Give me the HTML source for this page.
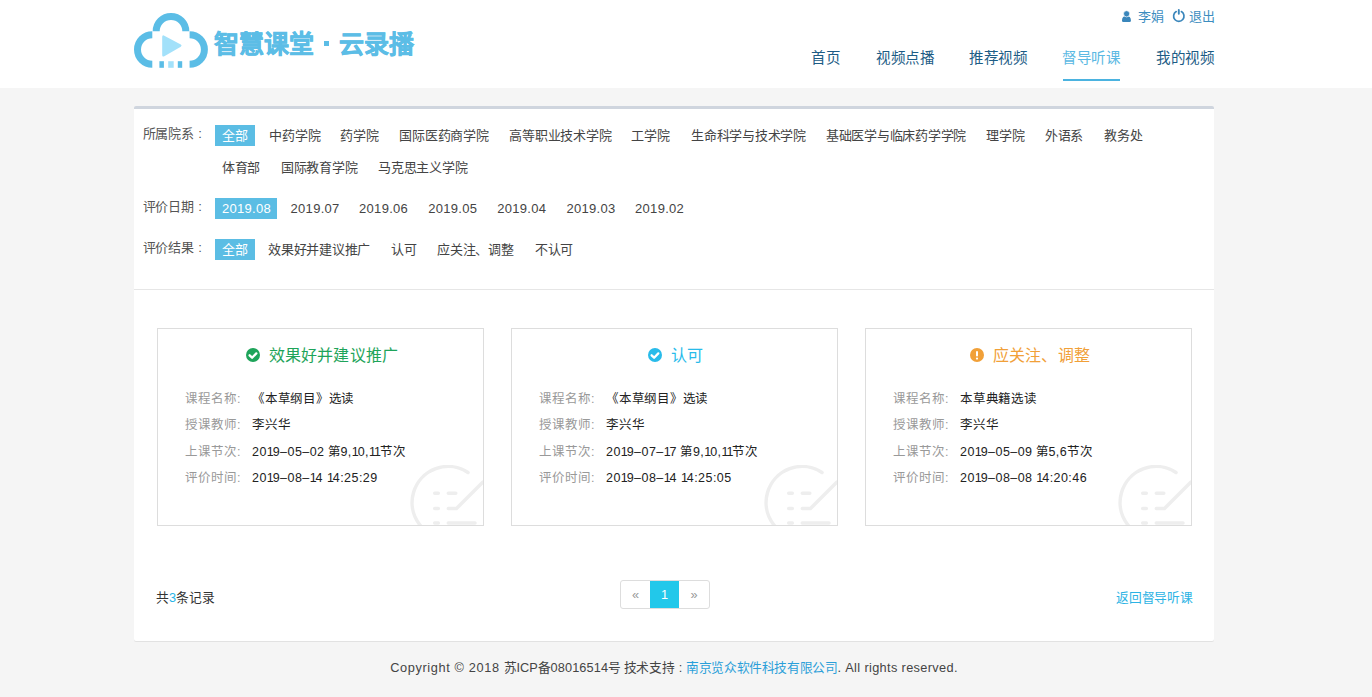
<!DOCTYPE html>
<html lang="zh-CN">
<head>
<meta charset="utf-8">
<style>
*{box-sizing:border-box;margin:0;padding:0}
html,body{width:1372px;height:697px;overflow:hidden}
body{background:#f5f5f5;font-family:"Liberation Sans",sans-serif;color:#333;position:relative}
.abs{position:absolute;white-space:nowrap}
#header{position:absolute;left:0;top:0;width:1372px;height:88px;background:#fff}
.logot{font-size:25px;font-weight:900;color:#5cbde6;letter-spacing:0;line-height:36px;-webkit-text-stroke:0.5px #5cbde6}
.user{top:7px;font-size:13px;color:#3c8dbf;line-height:20px}
.nav{top:47px;font-size:15px;color:#1d5c85;line-height:22px;transform:scale(0.97);transform-origin:0 0}
.nav.on{color:#5bb9e3}
#navline{left:1063px;top:79px;width:57px;height:2px;background:#4bb3e0}
#panel{position:absolute;left:134px;top:106px;width:1080px;height:535px;background:#fff;border-top:3px solid #cfd5de;border-radius:2px;box-shadow:0 1px 0 #e2e2e2}
#divider{position:absolute;left:134px;top:289px;width:1080px;height:1px;background:#e6e6e6}
.lbl{font-size:13px;color:#555;line-height:21px;letter-spacing:-0.25px;word-spacing:1.5px}
.tag{font-size:13px;color:#444;letter-spacing:-0.25px;line-height:21px;height:21px;padding:0 7px}
.tag.dt{letter-spacing:0.3px}
.tag.on{background:#5bbde4;color:#fff}
.card{position:absolute;top:328px;width:327px;height:198px;border:1px solid #ddd;overflow:hidden;background:#fff}
.ctitle{position:absolute;left:0;width:100%;padding-left:3px;top:16px;text-align:center;font-size:16px;line-height:22px;letter-spacing:0.2px}
.row{position:absolute;left:27px;font-size:12.5px;line-height:18px;white-space:nowrap}
.row .k{color:#999;display:inline-block;width:67px}
.row .v{color:#222;letter-spacing:-0.25px}
.row .d{letter-spacing:0.44px}
.row .one{font-style:normal;letter-spacing:-1.06px}
.wm{position:absolute;left:252px;top:136px}
#total{font-size:12.75px;color:#333;line-height:20px}
#back{font-size:12.75px;color:#2cb3e4;line-height:20px;letter-spacing:-0.25px}
#pager{display:flex;height:29px;border:1px solid #ddd;border-radius:3px;overflow:hidden}
.pg{display:block;width:29px;height:27px;line-height:27px;text-align:center;font-size:12.75px;color:#999}
.pg.on{background:#22c8ea;color:#fff}
#footer{font-size:12.75px;color:#444;line-height:20px;letter-spacing:-0.4px}
#footer i{font-style:normal}
#footer .l{letter-spacing:0.35px}
#footer .cl{display:inline-block;width:12px;text-align:center}
</style>
</head>
<body>
<div id="header"></div>
<!-- logo -->
<svg class="abs" style="left:130px;top:8px" width="84" height="66" viewBox="130 8 84 66">
<g fill="none" stroke="#5bbde6" stroke-width="7">
<path d="M156.2 31.3 A14.8 14.8 0 0 1 185.8 31.3"/>
<path d="M152.3 34.7 A14.8 14.8 0 0 0 152.3 64.3"/>
<path d="M189.6 34.7 A14.8 14.8 0 0 1 189.6 64.3"/>
</g>
<rect x="159.4" y="61.2" width="4.5" height="6.6" fill="#5bbde6"/>
<rect x="168.2" y="61.2" width="5.5" height="6.6" fill="#a3e1fa"/>
<rect x="177.8" y="61.2" width="4.4" height="6.6" fill="#5bbde6"/>
<path d="M162.2 37 Q162.2 34.6 164.3 35.7 L180.8 44.6 Q182.4 45.7 180.8 46.8 L164.3 56.2 Q162.2 57.3 162.2 55 Z" fill="#a3e1fa"/>
</svg>
<div class="abs logot" style="left:214px;top:26px">智慧课堂</div>
<div class="abs" style="left:324px;top:41px;width:5px;height:5px;background:#5cbde6"></div>
<div class="abs logot" style="left:339px;top:26px">云录播</div>

<svg class="abs" style="left:1120px;top:9px" width="14" height="14" viewBox="0 0 14 14"><path d="M2 11.2 Q2 6.9 6.45 6.9 Q10.9 6.9 10.9 11.2 V11.8 Q10.9 13 9.7 13 H3.2 Q2 13 2 11.8 Z" fill="#3a86bb"/><circle cx="6.6" cy="4.8" r="3.1" fill="#3a86bb" stroke="#fff" stroke-width="0.7"/></svg>
<div class="abs user" style="left:1138px">李娟</div>
<svg class="abs" style="left:1171px;top:7px" width="16" height="16" viewBox="0 0 16 16"><path d="M5.2 4.6 A5.2 5.2 0 1 0 10.4 4.6" fill="none" stroke="#3a86bb" stroke-width="1.7" stroke-linecap="round"/><path d="M7.8 3 V6.7" stroke="#3a86bb" stroke-width="1.9" stroke-linecap="round"/></svg>
<div class="abs user" style="left:1189px">退出</div>

<div class="abs nav" style="left:811px">首页</div>
<div class="abs nav" style="left:876px">视频点播</div>
<div class="abs nav" style="left:969px">推荐视频</div>
<div class="abs nav on" style="left:1062px">督导听课</div>
<div class="abs nav" style="left:1156px">我的视频</div>
<div id="navline" class="abs"></div>

<div id="panel"></div>
<div id="divider"></div>

<div class="abs lbl" style="left:142.5px;top:123px">所属院系 :</div>
<div class="abs lbl" style="left:142.5px;top:196px">评价日期 :</div>
<div class="abs lbl" style="left:142.5px;top:237px">评价结果 :</div>
<div class="abs tag on" style="left:215px;top:125px;width:40px">全部</div>
<div class="abs tag" style="left:262.25px;top:125px">中药学院</div>
<div class="abs tag" style="left:333.25px;top:125px">药学院</div>
<div class="abs tag" style="left:392.25px;top:125px">国际医药商学院</div>
<div class="abs tag" style="left:502.25px;top:125px">高等职业技术学院</div>
<div class="abs tag" style="left:624.25px;top:125px">工学院</div>
<div class="abs tag" style="left:684.05px;top:125px">生命科学与技术学院</div>
<div class="abs tag" style="left:818.75px;top:125px">基础医学与临床药学学院</div>
<div class="abs tag" style="left:979.25px;top:125px">理学院</div>
<div class="abs tag" style="left:1037.75px;top:125px">外语系</div>
<div class="abs tag" style="left:1097.25px;top:125px">教务处</div>
<div class="abs tag" style="left:214.75px;top:157px">体育部</div>
<div class="abs tag" style="left:273.75px;top:157px">国际教育学院</div>
<div class="abs tag" style="left:371.05px;top:157px">马克思主义学院</div>
<div class="abs tag dt on" style="left:215px;top:198px;width:62px">2019.08</div>
<div class="abs tag dt" style="left:283.55px;top:198px">2019.07</div>
<div class="abs tag dt" style="left:352.05px;top:198px">2019.06</div>
<div class="abs tag dt" style="left:421.25px;top:198px">2019.05</div>
<div class="abs tag dt" style="left:490.15px;top:198px">2019.04</div>
<div class="abs tag dt" style="left:559.45px;top:198px">2019.03</div>
<div class="abs tag dt" style="left:628.05px;top:198px">2019.02</div>
<div class="abs tag on" style="left:215px;top:239px;width:40px">全部</div>
<div class="abs tag" style="left:261.05px;top:239px">效果好并建议推广</div>
<div class="abs tag" style="left:383.75px;top:239px">认可</div>
<div class="abs tag" style="left:430.05px;top:239px">应关注、调整</div>
<div class="abs tag" style="left:527.75px;top:239px">不认可</div>
<div class="card" style="left:157px"><div class="ctitle" style="color:#1ea45a"><svg width="14" height="14" viewBox="0 0 14 14" style="vertical-align:-1px;margin-right:9px"><circle cx="7" cy="7" r="7" fill="#1ea45a"/><path d="M3.6 7.3 L6.1 9.7 L10.3 5.4" fill="none" stroke="#fff" stroke-width="2.3" stroke-linecap="round" stroke-linejoin="round"/></svg>效果好并建议推广</div><div class="row" style="top:61.0px"><span class="k">课程名称:</span><span class="v">《本草纲目》选读</span></div><div class="row" style="top:87.3px"><span class="k">授课教师:</span><span class="v">李兴华</span></div><div class="row" style="top:113.6px"><span class="k">上课节次:</span><span class="v"><span class="d">20<i class="one">1</i>9–05–02</span> 第<span class="d">9,<i class="one">1</i>0,<i class="one">1</i><i class="one">1</i></span>节次</span></div><div class="row" style="top:139.9px"><span class="k">评价时间:</span><span class="v"><span class="d">20<i class="one">1</i>9–08–<i class="one">1</i>4 <i class="one">1</i>4:25:29</span></span></div><svg class="wm" width="80" height="70" viewBox="0 0 80 70"><g fill="none" stroke="#eeeeee" stroke-width="3.5" stroke-linecap="round" stroke-linejoin="round">
<path d="M58 7.5 A36 36 0 1 0 38.5 73.5"/>
<path d="M24.7 28.3 H28.3 M38.3 28.3 H45.8 M24.7 43.4 H28.3 M38.3 43.4 H46.5 L73 17 M24.7 58 H28.3 M38.3 58 H65"/></g></svg></div>
<div class="card" style="left:511px"><div class="ctitle" style="color:#28bbea"><svg width="14" height="14" viewBox="0 0 14 14" style="vertical-align:-1px;margin-right:9px"><circle cx="7" cy="7" r="7" fill="#28bbea"/><path d="M3.6 7.3 L6.1 9.7 L10.3 5.4" fill="none" stroke="#fff" stroke-width="2.3" stroke-linecap="round" stroke-linejoin="round"/></svg>认可</div><div class="row" style="top:61.0px"><span class="k">课程名称:</span><span class="v">《本草纲目》选读</span></div><div class="row" style="top:87.3px"><span class="k">授课教师:</span><span class="v">李兴华</span></div><div class="row" style="top:113.6px"><span class="k">上课节次:</span><span class="v"><span class="d">20<i class="one">1</i>9–07–<i class="one">1</i>7</span> 第<span class="d">9,<i class="one">1</i>0,<i class="one">1</i><i class="one">1</i></span>节次</span></div><div class="row" style="top:139.9px"><span class="k">评价时间:</span><span class="v"><span class="d">20<i class="one">1</i>9–08–<i class="one">1</i>4 <i class="one">1</i>4:25:05</span></span></div><svg class="wm" width="80" height="70" viewBox="0 0 80 70"><g fill="none" stroke="#eeeeee" stroke-width="3.5" stroke-linecap="round" stroke-linejoin="round">
<path d="M58 7.5 A36 36 0 1 0 38.5 73.5"/>
<path d="M24.7 28.3 H28.3 M38.3 28.3 H45.8 M24.7 43.4 H28.3 M38.3 43.4 H46.5 L73 17 M24.7 58 H28.3 M38.3 58 H65"/></g></svg></div>
<div class="card" style="left:865px"><div class="ctitle" style="color:#f1a038"><svg width="14" height="14" viewBox="0 0 14 14" style="vertical-align:-1px;margin-right:9px"><circle cx="7" cy="7" r="7" fill="#f1a038"/><rect x="6" y="3" width="2" height="5.5" rx="1" fill="#fff"/><circle cx="7" cy="10.6" r="1.1" fill="#fff"/></svg>应关注、调整</div><div class="row" style="top:61.0px"><span class="k">课程名称:</span><span class="v">本草典籍选读</span></div><div class="row" style="top:87.3px"><span class="k">授课教师:</span><span class="v">李兴华</span></div><div class="row" style="top:113.6px"><span class="k">上课节次:</span><span class="v"><span class="d">20<i class="one">1</i>9–05–09</span> 第<span class="d">5,6</span>节次</span></div><div class="row" style="top:139.9px"><span class="k">评价时间:</span><span class="v"><span class="d">20<i class="one">1</i>9–08–08 <i class="one">1</i>4:20:46</span></span></div><svg class="wm" width="80" height="70" viewBox="0 0 80 70"><g fill="none" stroke="#eeeeee" stroke-width="3.5" stroke-linecap="round" stroke-linejoin="round">
<path d="M58 7.5 A36 36 0 1 0 38.5 73.5"/>
<path d="M24.7 28.3 H28.3 M38.3 28.3 H45.8 M24.7 43.4 H28.3 M38.3 43.4 H46.5 L73 17 M24.7 58 H28.3 M38.3 58 H65"/></g></svg></div>
<div class="abs" id="total" style="left:156px;top:588px">共<span style="color:#27b4e6">3</span>条记录</div>
<div class="abs" id="pager" style="left:620px;top:580px"><span class="pg">«</span><span class="pg on">1</span><span class="pg" style="width:30px">»</span></div>
<div class="abs" id="back" style="left:1116px;top:588px">返回督导听课</div>
<div class="abs" id="footer" style="left:0;width:1348px;top:658px;text-align:center"><i class="l" style="letter-spacing:0.63px">Copyright © 2018 </i>苏<i class="l" style="letter-spacing:0.1px">ICP</i>备<i class="l" style="letter-spacing:0.1px">08016514</i>号 技术支持<i class="cl">:</i><span style="color:#2b9fd9">南京览众软件科技有限公司</span><i class="l">. All rights reserved.</i></div>
</body>
</html>
